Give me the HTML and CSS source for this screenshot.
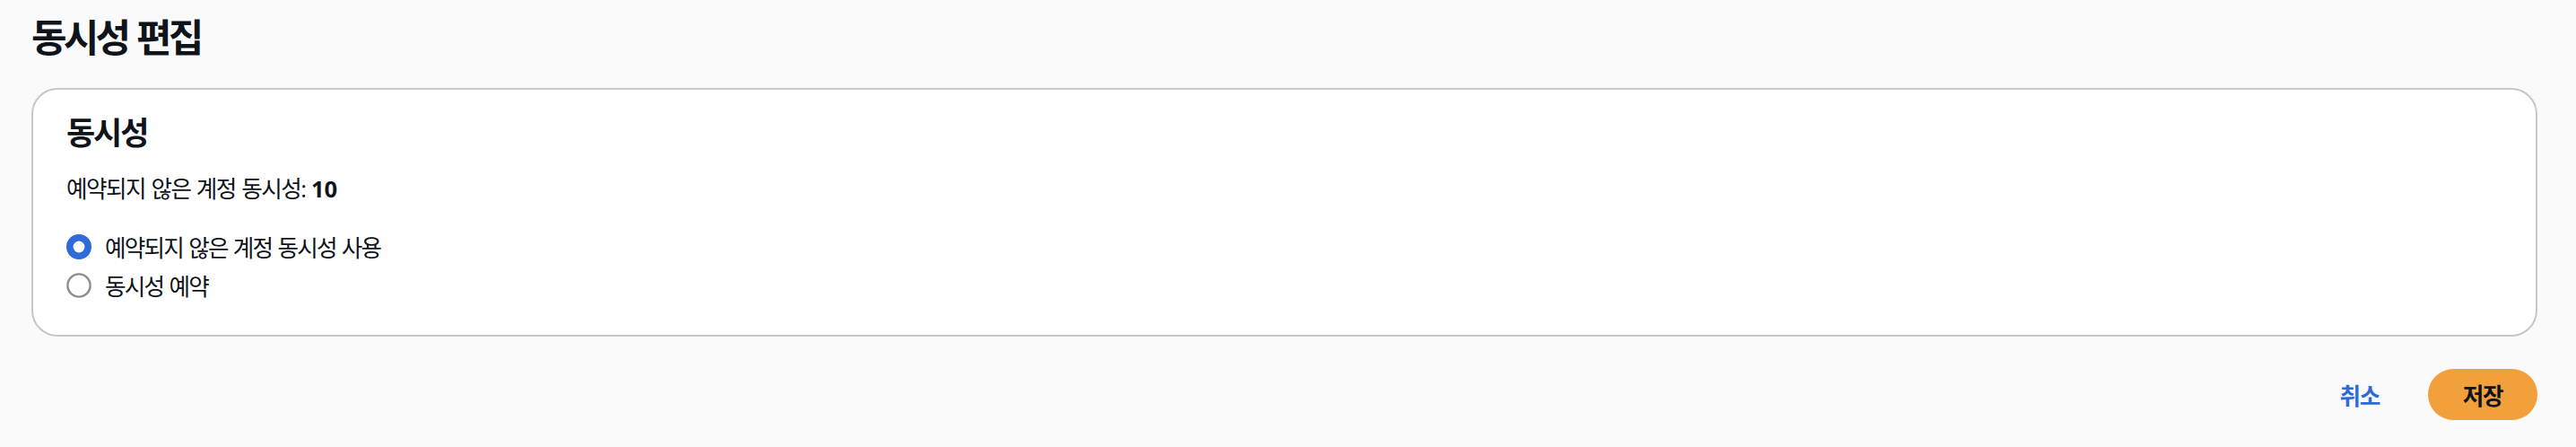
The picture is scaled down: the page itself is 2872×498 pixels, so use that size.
FILE: index.html
```html
<!DOCTYPE html>
<html lang="ko">
<head>
<meta charset="utf-8">
<title>동시성 편집</title>
<link rel="stylesheet" href="styles.css">
</head>
<body>
<div class="page">
  <h1 class="title">동시성 편집</h1>
  <section class="card">
    <h2 class="card-title">동시성</h2>
    <p class="info">예약되지 않은 계정 동시성: <b class="num">10</b></p>
    <div class="radios">
      <label class="radio">
        <svg class="radio-icon" viewBox="0 0 28 28" width="28" height="28"><circle cx="14" cy="14" r="10.2" fill="#ffffff" stroke="#2f6bd8" stroke-width="7.6"/></svg>
        <span>예약되지 않은 계정 동시성 사용</span>
      </label>
      <label class="radio">
        <svg class="radio-icon" viewBox="0 0 28 28" width="28" height="28"><circle cx="14" cy="14" r="12.6" fill="#ffffff" stroke="#8c8c94" stroke-width="2.4"/></svg>
        <span>동시성 예약</span>
      </label>
    </div>
  </section>
  <div class="actions">
    <button class="btn-link">취소</button>
    <button class="btn-primary">저장</button>
  </div>
</div>
</body>
</html>
```

FILE: styles.css
```css
html, body {
  margin: 0;
  padding: 0;
  background: #fafafa;
}
body {
  font-family: "Open Sans", "Noto Sans CJK KR", sans-serif;
  color: #0f141a;
}
.page {
  padding: 12px 43px 0 35px;
}
.title {
  margin: 0;
  font-size: 43px;
  line-height: 60px;
  font-weight: 700;
  letter-spacing: -0.09em;
  word-spacing: 0.06em;
}
.card {
  margin-top: 26px;
  background: #ffffff;
  border: 2px solid #c6c6cd;
  border-radius: 29px;
  padding: 25px 36px 35px 37px;
}
.card-title {
  margin: 0;
  font-size: 35px;
  line-height: 46px;
  font-weight: 700;
  letter-spacing: -0.06em;
}
.info {
  margin: 22px 0 0 0;
  font-size: 25.6px;
  line-height: 36px;
  letter-spacing: -0.06em;
  word-spacing: 0.05em;
}
.num {
  font-weight: 700;
  letter-spacing: 0;
}
.radios {
  margin-top: 26px;
  display: flex;
  flex-direction: column;
  gap: 3px;
}
.radio {
  display: flex;
  align-items: center;
  gap: 15px;
  height: 40px;
  font-size: 25.6px;
  letter-spacing: -0.07em;
  word-spacing: 0.05em;
}
.radio-icon {
  display: block;
  flex: none;
}
.actions {
  margin-top: 36px;
  display: flex;
  justify-content: flex-end;
  align-items: center;
  gap: 26px;
}
.btn-link {
  font-family: inherit;
  background: none;
  border: none;
  padding: 0 28px;
  font-size: 25.6px;
  font-weight: 700;
  color: #2f6bd8;
  height: 57px;
  letter-spacing: -0.05em;
}
.btn-primary {
  font-family: inherit;
  background: #f2a03b;
  border: none;
  border-radius: 29px;
  width: 122px;
  height: 57px;
  font-size: 25.6px;
  font-weight: 700;
  color: #0f141a;
  letter-spacing: -0.05em;
}
```
